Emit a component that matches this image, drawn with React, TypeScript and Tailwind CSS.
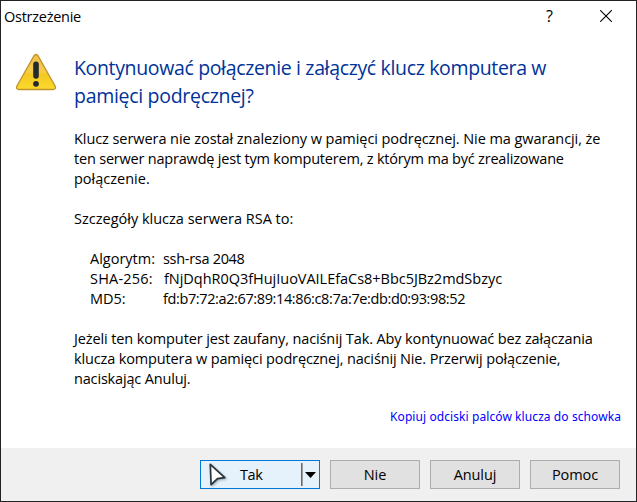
import React from "react";

function Line({ children, className = "" }: { children: React.ReactNode; className?: string }) {
  return (
    <div className="h-5 leading-5">
      <span className={"whitespace-pre " + className}>{children}</span>
    </div>
  );
}

function WarningIcon() {
  return (
    <svg className="mt-[20px] h-10 w-[44px]" viewBox="0 0 44 40" aria-hidden="true">
      <defs>
        <linearGradient id="warn" x1="0" y1="0" x2="0" y2="1">
          <stop offset="0" stopColor="#eec04a" />
          <stop offset="0.5" stopColor="#f5cd48" />
          <stop offset="0.56" stopColor="#f3c822" />
          <stop offset="1" stopColor="#fbda2c" />
        </linearGradient>
      </defs>
      <path
        d="M20.2 2.4Q22 .7 23.8 2.4L41.2 33.2Q42.2 36.5 39 36.5H5Q1.8 36.5 2.8 33.2Z"
        fill="url(#warn)"
        stroke="#c3922b"
        strokeWidth="1.3"
      />
      <path d="M22 11.2V23" stroke="#24292e" strokeWidth="5.6" strokeLinecap="round" />
      <circle cx="22" cy="30.8" r="2.9" fill="#24292e" />
    </svg>
  );
}

function PushButton({ label, className = "" }: { label: string; className?: string }) {
  return (
    <button className={"h-[29px] w-[90px] border border-[#adadad] bg-[#e1e1e1] text-center leading-[27px] " + className}>
      {label}
    </button>
  );
}

export default function App() {
  return (
    <div className="flex h-[502px] w-[637px] flex-col border border-[#232225] bg-white font-['Open_Sans','Noto_Sans',sans-serif] text-[14.5px] text-black">
      <header className="flex h-[32px] shrink-0 items-center pl-[3px]">
        <span className="flex-1 leading-5 tracking-[-0.26px]">Ostrzeżenie</span>
        <span className="w-[56px] pb-0.5 pl-0.5 text-[16px] leading-5">?</span>
        <svg className="mb-0.5 mr-[24px] h-3 w-3" viewBox="0 0 12 12" aria-hidden="true">
          <path d="M.2.2 11.8 11.8M11.8.2.2 11.8" stroke="#000" strokeWidth="1.1" />
        </svg>
      </header>
      <main className="flex h-[415px] shrink-0 pl-[13px]">
        <WarningIcon />
        <div className="ml-[16px] w-[547px]">
          <h1 className="mt-[21px] text-[19.5px] leading-7 text-[#003399]">
            <span className="block whitespace-pre tracking-[-0.35px]">Kontynuować połączenie i załączyć klucz komputera w</span>
            <span className="block whitespace-pre tracking-[-0.3px]">pamięci podręcznej?</span>
          </h1>
          <div className="mt-[19px]">
            <Line className="tracking-[-0.07px]">Klucz serwera nie został znaleziony w pamięci podręcznej. Nie ma gwarancji, że</Line>
            <Line className="tracking-[-0.2px]">ten serwer naprawdę jest tym komputerem, z którym ma być zrealizowane</Line>
            <Line>połączenie.</Line>
          </div>
          <div className="mt-5">
            <Line>Szczegóły klucza serwera RSA to:</Line>
          </div>
          <div className="mt-5 grid grid-cols-[73px_1fr] pl-4">
            <Line>Algorytm:</Line>
            <Line className="tracking-[-0.3px]">ssh-rsa 2048</Line>
            <Line className="tracking-[0.2px]">SHA-256:</Line>
            <Line className="pl-px tracking-[-0.03px]">fNjDqhR0Q3fHujIuoVAILEfaCs8+Bbc5JBz2mdSbzyc</Line>
            <Line>MD5:</Line>
            <Line className="tracking-[-0.38px]">fd:b7:72:a2:67:89:14:86:c8:7a:7e:db:d0:93:98:52</Line>
          </div>
          <div className="mt-5">
            <Line className="tracking-[-0.12px]">Jeżeli ten komputer jest zaufany, naciśnij Tak. Aby kontynuować bez załączania</Line>
            <Line className="tracking-[-0.14px]">klucza komputera w pamięci podręcznej, naciśnij Nie. Przerwij połączenie,</Line>
            <Line className="tracking-[-0.17px]">naciskając Anuluj.</Line>
          </div>
          <div className="mt-[20px] text-right font-['Noto_Sans',sans-serif] text-[12px] leading-4 tracking-[0.085px] text-[#0000ff]">
            <a className="whitespace-pre">Kopiuj odciski palców klucza do schowka</a>
          </div>
        </div>
      </main>
      <footer className="flex flex-1 items-start justify-end gap-[10px] bg-[#f0f0f0] pr-[16px] pt-[12px]">
        <button className="flex h-[29px] w-[120px] items-center border border-[#0078d7] bg-[#e5f1fb]">
          <svg className="ml-[6px] h-[26px] w-[20px] drop-shadow-[1px_1px_1px_#9aa8b5]" viewBox="0 0 20 26" aria-hidden="true">
            <path d="M3.3 2.4 17.8 15.6 10.5 16.6 4.1 22.6Z" fill="#fff" stroke="#263238" strokeWidth="1.7" strokeLinejoin="round" />
          </svg>
          <span className="ml-[13px] flex-1 text-left leading-[27px] tracking-[-0.4px]">Tak</span>
          <span className="h-[23px] w-0.5 border-l border-[#696969] bg-[#a0a0a0]" />
          <svg className="ml-0.5 mr-[3px] h-1.5 w-[11px]" viewBox="0 0 11 6" aria-hidden="true">
            <path d="M0 0H11L5.5 6Z" />
          </svg>
        </button>
        <PushButton label="Nie" />
        <PushButton label="Anuluj" className="tracking-[-0.1px]" />
        <PushButton label="Pomoc" className="tracking-[-0.1px]" />
      </footer>
    </div>
  );
}
